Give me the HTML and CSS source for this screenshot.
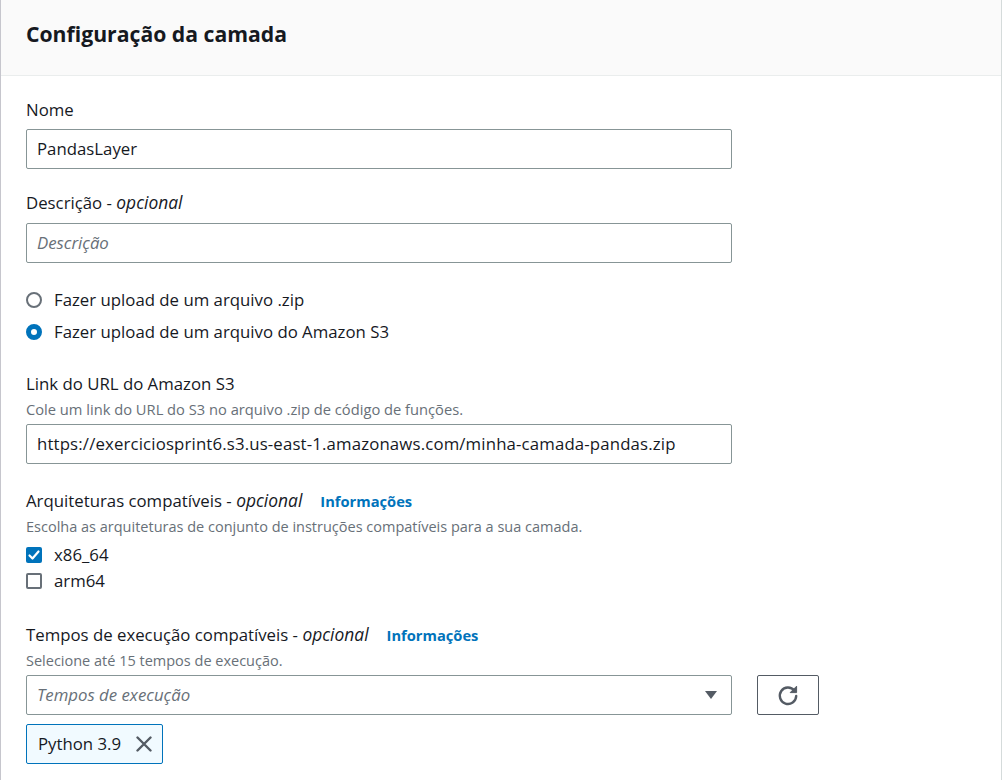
FILE: index.html
```html
<!DOCTYPE html>
<html lang="pt">
<head>
<meta charset="utf-8">
<link rel="stylesheet" href="styles.css">
</head>
<body>
<div class="panel">
  <div class="panel-header">
    <h2 class="panel-title">Configuração da camada</h2>
  </div>
  <div class="panel-body">
    <div class="field f-nome">
      <div class="label">Nome</div>
      <div class="input">PandasLayer</div>
    </div>
    <div class="field f-desc">
      <div class="label">Descrição - <i>opcional</i></div>
      <div class="input placeholder">Descrição</div>
    </div>
    <div class="radios">
      <div class="radio-row"><span class="radio"></span><span>Fazer upload de um arquivo .zip</span></div>
      <div class="radio-row"><span class="radio checked"></span><span>Fazer upload de um arquivo do Amazon S3</span></div>
    </div>
    <div class="field f-link">
      <div class="label">Link do URL do Amazon S3</div>
      <div class="desc">Cole um link do URL do S3 no arquivo .zip de código de funções.</div>
      <div class="input url">https://exerciciosprint6.s3.us-east-1.amazonaws.com/minha-camada-pandas.zip</div>
    </div>
    <div class="field f-arch">
      <div class="label">Arquiteturas compatíveis - <i>opcional</i><a class="info">Informações</a></div>
      <div class="desc">Escolha as arquiteturas de conjunto de instruções compatíveis para a sua camada.</div>
      <div class="checks">
        <div class="check-row"><span class="checkbox checked"><svg viewBox="0 0 16 16" width="16" height="16"><path d="M3.5 8.5l3 3 6-7" fill="none" stroke="#fff" stroke-width="2.2" stroke-linecap="round" stroke-linejoin="round"/></svg></span><span>x86_64</span></div>
        <div class="check-row"><span class="checkbox"></span><span>arm64</span></div>
      </div>
    </div>
    <div class="field f-runtime">
      <div class="label">Tempos de execução compatíveis - <i>opcional</i><a class="info">Informações</a></div>
      <div class="desc">Selecione até 15 tempos de execução.</div>
      <div class="select-row">
        <div class="input select placeholder"><span>Tempos de execução</span><svg class="caret" viewBox="0 0 12 8" width="12" height="8"><path d="M0 0h12L6 8z" fill="#545b64"/></svg></div>
        <button class="refresh"><svg viewBox="0 0 24 24" width="24" height="24"><path d="M18.4 7.6A8.2 8.2 0 1 0 20.2 13" fill="none" stroke="#545b64" stroke-width="2.4" stroke-linecap="round"/><path d="M20.6 3.2v6.4h-6.4z" fill="#545b64" stroke="#545b64" stroke-width="1" stroke-linejoin="round"/></svg></button>
      </div>
      <div class="token"><span>Python 3.9</span><svg viewBox="0 0 16 16" width="16" height="16"><path d="M1.5 1.5l13 13M14.5 1.5l-13 13" stroke="#545b64" stroke-width="2.4" stroke-linecap="round"/></svg></div>
    </div>
  </div>
</div>
</body>
</html>
```
FILE: styles.css
```css
html, body {
  margin: 0;
  padding: 0;
  background: #ffffff;
}
body {
  font-family: "Open Sans", "Noto Sans", sans-serif;
  color: #16191f;
  font-size: 16.8px;
  line-height: 22px;
}
.panel {
  width: 1000px;
  height: 780px;
  border-left: 1px solid #c6c6cd;
  border-right: 1px solid #d5dbdb;
  overflow: hidden;
}
.panel-header {
  height: 75px;
  background: #fafafa;
  border-bottom: 1px solid #eaeded;
  display: flex;
  align-items: center;
  padding: 0 25px;
}
.panel-title {
  margin: 0;
  font-size: 21.2px;
  font-weight: 700;
  line-height: 28px;
  padding-bottom: 8px;
}
.panel-body {
  padding: 23px 25px 0;
  display: flex;
  flex-direction: column;
}
.field { display: flex; flex-direction: column; }
.label { line-height: 22px; height: 22px; }
.label i { font-style: italic; font-size: 17.4px; line-height: 1; }
.label + .input { margin-top: 8px; }
.desc {
  font-size: 14.5px;
  line-height: 21px;
  color: #687078;
  margin-top: 4px;
}
.f-link .desc { font-size: 14.7px; }
.desc + .input, .desc + .select-row { margin-top: 4px; }
.info {
  color: #0073bb;
  font-weight: 700;
  font-size: 14.7px;
  line-height: 1;
  margin-left: 18px;
}
.input {
  width: 706px;
  height: 40px;
  box-sizing: border-box;
  border: 1px solid #879596;
  border-radius: 2px;
  padding: 0 10px;
  display: flex;
  align-items: center;
  white-space: nowrap;
}
.url { letter-spacing: 0.15px; }
.placeholder { color: #687078; font-style: italic; }
.f-desc { margin-top: 23px; }
.f-desc .label + .input { margin-top: 9px; }
.radios { margin-top: 25px; display: flex; flex-direction: column; gap: 8px; }
.radio-row, .check-row {
  display: flex;
  align-items: center;
  gap: 12px;
  height: 24px;
}
.radio {
  width: 16px;
  height: 16px;
  box-sizing: border-box;
  border-radius: 50%;
  border: 2px solid #687078;
  flex: none;
}
.radio.checked { border: 5px solid #0073bb; }
.f-link { margin-top: 29px; }
.f-arch { margin-top: 26px; }
.checks { margin-top: 6px; display: flex; flex-direction: column; gap: 2px; }
.checkbox {
  width: 16px;
  height: 16px;
  box-sizing: border-box;
  border: 2px solid #687078;
  border-radius: 2px;
  flex: none;
  display: flex;
}
.checkbox.checked { background: #0073bb; border: none; }
.f-runtime { margin-top: 31px; }
.select-row { display: flex; gap: 25px; }
.select { justify-content: space-between; padding-right: 14px; }
.refresh {
  width: 62px;
  height: 40px;
  box-sizing: border-box;
  border: 1px solid #545b64;
  border-radius: 2px;
  background: #ffffff;
  display: flex;
  align-items: center;
  justify-content: center;
  padding: 0;
}
.token {
  margin-top: 9px;
  align-self: flex-start;
  height: 40px;
  box-sizing: border-box;
  border: 1px solid #0073bb;
  border-radius: 2px;
  background: #f1faff;
  display: flex;
  align-items: center;
  gap: 15px;
  padding: 0 10px 0 11px;
}
```
